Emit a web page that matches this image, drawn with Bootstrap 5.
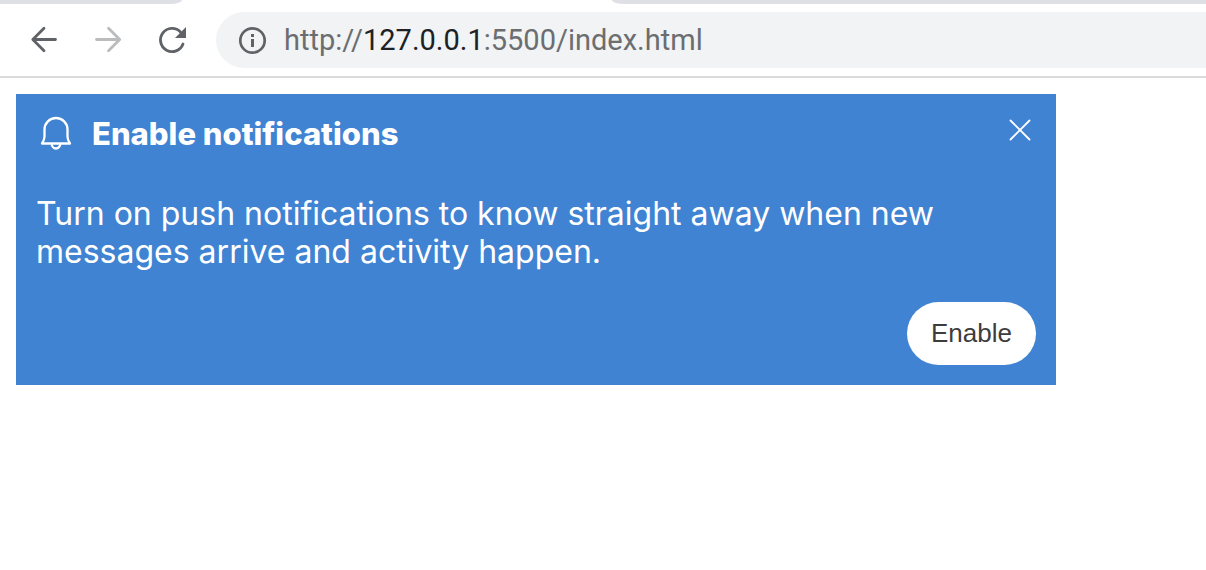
<!DOCTYPE html>
<html lang="en">
<head>
<meta charset="utf-8">
<meta name="viewport" content="width=device-width, initial-scale=1">
<title>Enable notifications</title>
<link href="https://cdn.jsdelivr.net/npm/bootstrap@5.3.0/dist/css/bootstrap.min.css" rel="stylesheet">
<style>
  body { font-family: Inter, "Liberation Sans", sans-serif; background: #fff; }
  .tab-strip { height: 4px; background: #fff; }
  .tab-edge { height: 4px; background: #dee0e6; }
  .tab-left { width: 182px; border-bottom-right-radius: 12px 4px; }
  .tab-right { margin-left: 430px; border-bottom-left-radius: 12px 4px; }
  .toolbar { padding: 8px 0 8px 12px; border-bottom: 2px solid #dadcdc; }
  .tool { width: 64px; height: 56px; color: #5f6368; }
  .tool:disabled { color: #babcbe; opacity: 1; border-color: transparent; }
  .address { height: 56px; margin-left: 12px; padding-left: 20px; gap: 16px; background: #f1f3f4; color: #5f6368; }
  .url { font-family: Roboto, sans-serif; font-size: 29px; line-height: 40px; color: #6b6d70; }
  .url-host { color: #202124; }
  .page-area { padding: 16px; }
  .notice { max-width: 1040px; padding: 20px; background: #4083d3; color: #fff; }
  .notice-title { font-size: 31px; line-height: 40px; font-weight: 800; gap: 16px; }
  .notice-text { margin: 41px 0 31px; font-size: 32px; line-height: 38px; }
  .close-x { width: 32px; height: 32px; color: #fff; }
  .enable { padding: 12px 24px; font-family: "Liberation Sans", Arial, sans-serif; font-size: 26px; line-height: 39px; background: #fff; color: #3d3d3d; }
  .enable:hover { background: #eef3fa; color: #3d3d3d; }
</style>
</head>
<body>
<header>
  <div class="tab-strip d-flex">
    <div class="tab-edge tab-left flex-shrink-0"></div>
    <div class="tab-edge tab-right flex-grow-1"></div>
  </div>
  <nav class="toolbar d-flex align-items-center" aria-label="Browser">
    <button type="button" class="tool btn border-0 p-0 d-flex align-items-center justify-content-center" aria-label="Back">
      <svg width="32" height="32" viewBox="0 0 32 32" fill="none" stroke="currentColor" stroke-width="2.8" stroke-linecap="round"><path d="M27.500 15.500H5M16 4.300 4.800 15.500 16 26.700" stroke-linejoin="round"/></svg>
    </button>
    <button type="button" disabled class="tool btn border-0 p-0 d-flex align-items-center justify-content-center" aria-label="Forward">
      <svg width="32" height="32" viewBox="0 0 32 32" fill="none" stroke="currentColor" stroke-width="2.8" stroke-linecap="round"><path d="M4.500 15.500h22.500M16.500 4.300 27.700 15.500 16.500 26.700" stroke-linejoin="round"/></svg>
    </button>
    <button type="button" class="tool btn border-0 p-0 d-flex align-items-center justify-content-center" aria-label="Reload">
      <svg width="32" height="32" viewBox="0 0 32 32" fill="none" stroke="currentColor" stroke-width="2.8"><path d="M27 20A11.600 11.600 0 1 1 24.500 8" stroke-linecap="round"/><path d="M30 3v11H19z" fill="currentColor" stroke="none"/></svg>
    </button>
    <div class="address flex-grow-1 d-flex align-items-center rounded-start-pill">
      <svg class="flex-shrink-0" width="32" height="32" viewBox="0 0 32 32" fill="none" stroke="currentColor" stroke-width="2.7" aria-hidden="true"><circle cx="16.500" cy="16.500" r="12.200"/><path d="M16.500 15v8M16.500 10v3" stroke-width="3"/></svg>
      <div class="url flex-grow-1 text-nowrap" role="textbox" contenteditable="true" spellcheck="false" aria-label="Address">http://<span class="url-host">127.0.0.1</span>:5500/index.html</div>
    </div>
  </nav>
</header>
<main class="page-area">
  <section class="notice">
    <div class="d-flex justify-content-between align-items-start">
      <h1 class="notice-title d-flex align-items-center mb-0">
        <svg width="40" height="40" viewBox="0 0 40 40" fill="none" stroke="currentColor" stroke-width="2.3" stroke-linejoin="round" aria-hidden="true"><path d="M6 29.500c2-3 2.500-4 2.500-7V15.500a11.500 11.500 0 0 1 23 0v7c0 3 .5 4 2.500 7z"/><path d="M15.700 29.500a4.300 5 0 0 0 8.600 0"/></svg>
        Enable notifications
      </h1>
      <button type="button" class="close-x btn border-0 p-0 d-flex" aria-label="Close">
        <svg width="32" height="32" viewBox="0 0 32 32" fill="none" stroke="currentColor" stroke-width="1.800" stroke-linecap="round"><path d="m6.500 6.500 19 19M25.500 6.500l-19 19"/></svg>
      </button>
    </div>
    <p class="notice-text">Turn on push notifications to know straight away when new messages arrive and activity happen.</p>
    <div class="d-flex justify-content-end">
      <button type="button" class="enable btn border-0 rounded-pill">Enable</button>
    </div>
  </section>
</main>
<script src="https://cdn.jsdelivr.net/npm/bootstrap@5.3.0/dist/js/bootstrap.bundle.min.js"></script>
</body>
</html>
